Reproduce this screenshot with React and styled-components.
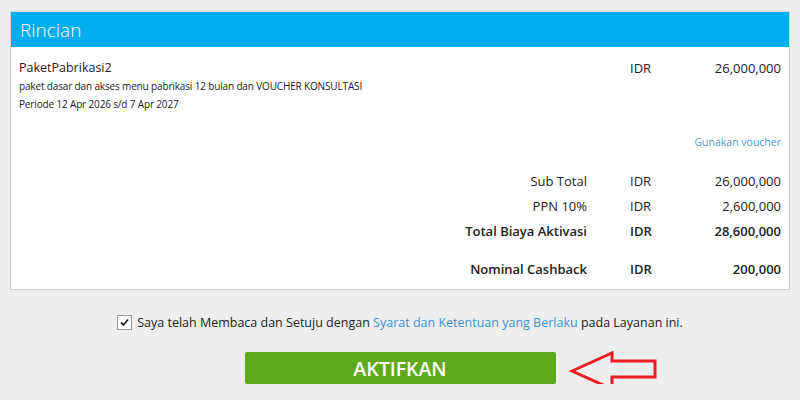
import styled, { createGlobalStyle } from "styled-components";

const GlobalStyle = createGlobalStyle`
    html, body {
        margin: 0;
        padding: 0;
        background: #eeeeee;
        font-family: "Open Sans", "Noto Sans", sans-serif;
        color: #222;
    }
`;

const Page = styled.div`
    padding: 11px 10px 0;
`;

const Panel = styled.div`
    background: #fff;
    border: 1px solid #d4d4d4;
`;

const PanelHeader = styled.div`
    height: 35px;
    background: #00adef;
    color: #fff;
    display: flex;
    align-items: center;
    padding-left: 9px;
    font-size: 19px;
    font-weight: 300;
`;

const PanelBody = styled.div`
    padding: 12px 8px 8px;
`;

const Row = styled.div`
    display: grid;
    grid-template-columns: 1fr 40px 111px;
    align-items: center;
    height: 25px;
    font-size: 13px;
    font-weight: ${({ $bold }) => ($bold ? 600 : 400)};
    margin-top: ${({ $mt }) => $mt || 0}px;
`;

const ItemRow = styled(Row)`
    height: auto;
    align-items: start;
`;

const Label = styled.div`
    text-align: right;
    padding-right: 43px;
`;

const Amount = styled.div`
    text-align: right;
`;

const ItemName = styled.div`
    font-size: 12.5px;
    line-height: 18px;
`;

const ItemNote = styled.div`
    font-size: 10px;
    letter-spacing: -0.15px;
    line-height: 18px;
`;

const Cell = styled.div`
    line-height: 18px;
`;

const VoucherLink = styled.a`
    display: block;
    text-align: right;
    margin-top: 21px;
    line-height: 16px;
    font-size: 10.5px;
    color: #4f97d8;
    text-decoration: none;
`;

const Agreement = styled.label`
    display: flex;
    justify-content: center;
    align-items: center;
    gap: 5px;
    margin-top: 24px;
    font-size: 12.5px;
    color: #222;
`;

const CheckBox = styled.span`
    width: 13px;
    height: 13px;
    border: 1px solid #9a9a9a;
    background: #fff;
    display: flex;
    align-items: center;
    justify-content: center;
`;

const Link = styled.a`
    color: #3f8fd8;
    text-decoration: none;
`;

const ButtonRow = styled.div`
    position: relative;
    display: flex;
    justify-content: center;
    margin-top: 21px;
`;

const ActivateButton = styled.button`
    width: 311px;
    height: 32px;
    border: none;
    border-radius: 2px;
    background: #5faa1a;
    color: #fff;
    font-family: "Open Sans", sans-serif;
    font-size: 19.5px;
    font-weight: 600;
    cursor: pointer;
`;

const Pointer = styled.svg`
    position: absolute;
    left: 558px;
    top: -1px;
`;

const summary = [
    { label: "Sub Total", value: "26,000,000" },
    { label: "PPN 10%", value: "2,600,000" },
    { label: "Total Biaya Aktivasi", value: "28,600,000", bold: true },
];

export default function App() {
    return (
        <Page>
            <GlobalStyle />
            <Panel>
                <PanelHeader>Rincian</PanelHeader>
                <PanelBody>
                    <ItemRow>
                        <div>
                            <ItemName>PaketPabrikasi2</ItemName>
                            <ItemNote>paket dasar dan akses menu pabrikasi 12 bulan dan VOUCHER KONSULTASI</ItemNote>
                            <ItemNote>Periode 12 Apr 2026 s/d 7 Apr 2027</ItemNote>
                        </div>
                        <Cell>IDR</Cell>
                        <Cell as={Amount}>26,000,000</Cell>
                    </ItemRow>
                    <VoucherLink href="#">Gunakan voucher</VoucherLink>
                    {summary.map((r, i) => (
                        <Row key={r.label} $bold={r.bold} $mt={i === 0 ? 18 : 0}>
                            <Label>{r.label}</Label>
                            <div>IDR</div>
                            <Amount>{r.value}</Amount>
                        </Row>
                    ))}
                    <Row $bold $mt={13}>
                        <Label>Nominal Cashback</Label>
                        <div>IDR</div>
                        <Amount>200,000</Amount>
                    </Row>
                </PanelBody>
            </Panel>
            <Agreement>
                <CheckBox>
                    <svg width="11" height="11" viewBox="0 0 11 11">
                        <path d="M2 5.5 L4.5 8 L9 2.5" fill="none" stroke="#222" strokeWidth="1.8" />
                    </svg>
                </CheckBox>
                <span>
                    Saya telah Membaca dan Setuju dengan <Link href="#">Syarat dan Ketentuan yang Berlaku</Link> pada Layanan ini.
                </span>
            </Agreement>
            <ButtonRow>
                <ActivateButton>AKTIFKAN</ActivateButton>
                <Pointer width="92" height="42" viewBox="0 0 92 42">
                    <path
                        d="M4 20 L44 2 L44 10 L87 10 L87 26 L44 26 L44 38 Z"
                        fill="none"
                        stroke="#ee1c24"
                        strokeWidth="3"
                        strokeLinejoin="miter"
                    />
                </Pointer>
            </ButtonRow>
        </Page>
    );
}
